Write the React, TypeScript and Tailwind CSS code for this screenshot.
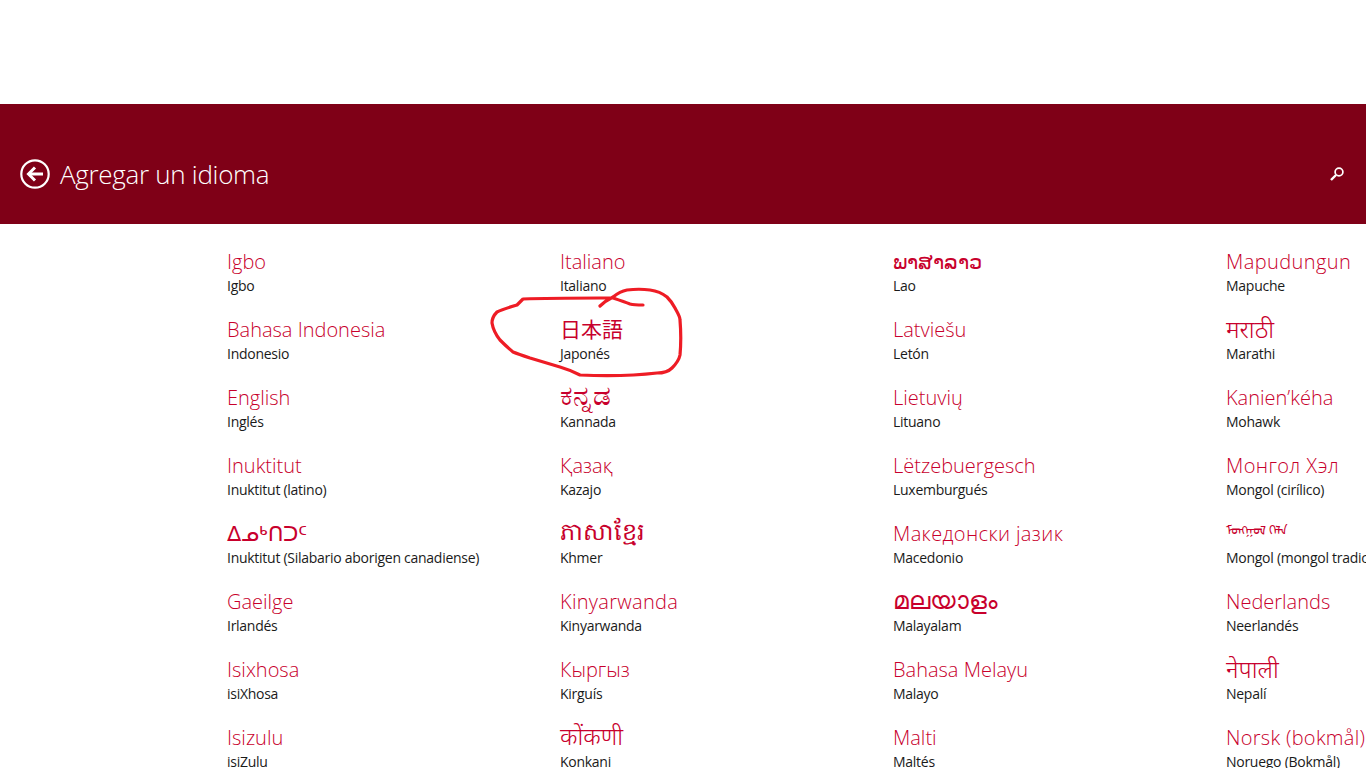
import React from 'react'

type Language = {
  name: string
  label: string
  nameClass?: string
}

const columns: Language[][] = [
  [
    { name: 'Igbo', label: 'Igbo' },
    { name: 'Bahasa Indonesia', label: 'Indonesio' },
    { name: 'English', label: 'Inglés' },
    { name: 'Inuktitut', label: 'Inuktitut (latino)' },
    { name: 'ᐃᓄᒃᑎᑐᑦ', label: 'Inuktitut (Silabario aborigen canadiense)', nameClass: 'text-[21px] leading-[26px] font-light' },
    { name: 'Gaeilge', label: 'Irlandés' },
    { name: 'Isixhosa', label: 'isiXhosa' },
    { name: 'Isizulu', label: 'isiZulu' },
  ],
  [
    { name: 'Italiano', label: 'Italiano' },
    { name: '日本語', label: 'Japonés', nameClass: 'text-[21px] leading-[26px] font-normal' },
    { name: 'ಕನ್ನಡ', label: 'Kannada', nameClass: 'text-[28px] leading-[20px] font-light' },
    { name: 'Қазақ', label: 'Kazajo' },
    { name: 'ភាសាខ្មែរ', label: 'Khmer', nameClass: 'text-[24px] leading-[22px] font-light' },
    { name: 'Kinyarwanda', label: 'Kinyarwanda', nameClass: 'text-[20px] leading-[28px] font-light tracking-[0.3px]' },
    { name: 'Кыргыз', label: 'Kirguís' },
    { name: 'कोंकणी', label: 'Konkani', nameClass: 'text-[24px] leading-[24px] font-light' },
  ],
  [
    { name: 'ພາສາລາວ', label: 'Lao', nameClass: 'text-[21px] leading-[26px] font-light' },
    { name: 'Latviešu', label: 'Letón' },
    { name: 'Lietuvių', label: 'Lituano' },
    { name: 'Lëtzebuergesch', label: 'Luxemburgués' },
    { name: 'Македонски јазик', label: 'Macedonio', nameClass: 'text-[20px] leading-[28px] font-light tracking-[0.38px]' },
    { name: 'മലയാളം', label: 'Malayalam', nameClass: 'text-[25px] leading-[22px] font-light' },
    { name: 'Bahasa Melayu', label: 'Malayo' },
    { name: 'Malti', label: 'Maltés' },
  ],
  [
    { name: 'Mapudungun', label: 'Mapuche', nameClass: 'text-[20px] leading-[28px] font-light tracking-[0.4px]' },
    { name: 'मराठी', label: 'Marathi', nameClass: 'text-[24px] leading-[26px] font-light' },
    { name: 'Kanien’kéha', label: 'Mohawk' },
    { name: 'Монгол Хэл', label: 'Mongol (cirílico)', nameClass: 'text-[20px] leading-[28px] font-light tracking-[0.4px]' },
    { name: 'ᠮᠣᠩᠭᠣᠯ ᠬᠡᠯᠡ', label: 'Mongol (mongol tradicional)', nameClass: 'text-[13px] leading-[20px] font-normal' },
    { name: 'Nederlands', label: 'Neerlandés' },
    { name: 'नेपाली', label: 'Nepalí', nameClass: 'text-[24px] leading-[26px] font-light' },
    { name: 'Norsk (bokmål)', label: 'Noruego (Bokmål)', nameClass: 'text-[20px] leading-[28px] font-light tracking-[0.3px]' },
  ],
]

const BackIcon = () => (
  <svg width="30" height="30" viewBox="0 0 30 30" fill="none" stroke="white" aria-hidden="true">
    <circle cx="15" cy="15" r="13.7" strokeWidth="2.2" />
    <path d="M23 15H9" strokeWidth="3" />
    <path d="M15 8.5L8.5 15L15 21.5" strokeWidth="3" />
  </svg>
)

const SearchIcon = () => (
  <svg width="16" height="16" viewBox="0 0 16 16" fill="none" stroke="white" aria-hidden="true">
    <circle cx="10" cy="6" r="3.9" strokeWidth="1.7" />
    <path d="M7 9L2 14" strokeWidth="2.4" />
  </svg>
)

// hand drawn ring on top of the screenshot
const InkRing = () => (
  <svg className="absolute top-0 left-0" width="1366" height="768" fill="none" aria-hidden="true">
    <path
      d="M600 306C605 301 609 299 613 297C618 293 622 291 627 290C635 289 643 289 650 290C657 291 662 293 667 297C671 301 673 304 675 308C677 312 680 316 680 320C681 332 681 344 680 355C679 360 676 364 672 368C668 372 663 373 657 373C631 376 605 376 580 375C574 372 567 369 560 367C550 364 540 361 530 358C524 356 518 354 513 352C508 348 504 344 500 340C496 335 493 329 492 323C492 318 494 315 497 312C503 309 510 307 517 305C519 303 521 301 523 299C548 298 574 298 600 298L613 298C619 300 625 302 630 304C634 305 638 305 643 305"
      stroke="#ee1c25"
      strokeWidth="3.2"
      strokeLinecap="round"
      strokeLinejoin="round"
    />
  </svg>
)

export default function App() {
  return (
    <div className="relative h-screen overflow-hidden bg-white font-['Open_Sans','Noto_Sans','DejaVu_Sans','Noto_Sans_CJK_JP',sans-serif]">
      <div className="h-[104px]" />

      <header className="flex h-[120px] items-center justify-between bg-[#7f0017] pt-[20px] pr-[21px] pl-[20px] text-white">
        <div className="flex items-center gap-[10px]">
          <BackIcon />
          <h1 className="text-[26px] leading-[32px] font-light tracking-[-0.3px] whitespace-nowrap">
            Agregar un idioma
          </h1>
        </div>
        <SearchIcon />
      </header>

      <main className="flex pt-[24px] pl-[227px]">
        {columns.map((column, i) => (
          <div key={i} className="flex w-[333px] shrink-0 flex-col">
            {column.map((lang) => (
              <div key={lang.label} className="flex h-[68px] flex-col whitespace-nowrap">
                <span className={`h-[28px] text-[#c8002c] ${lang.nameClass ?? 'text-[20px] leading-[28px] font-light'}`}>
                  {lang.name}
                </span>
                <span className="text-[14px] leading-[20px] tracking-[-0.27px] text-[#1a1a1a]">{lang.label}</span>
              </div>
            ))}
          </div>
        ))}
      </main>

      <InkRing />
    </div>
  )
}
